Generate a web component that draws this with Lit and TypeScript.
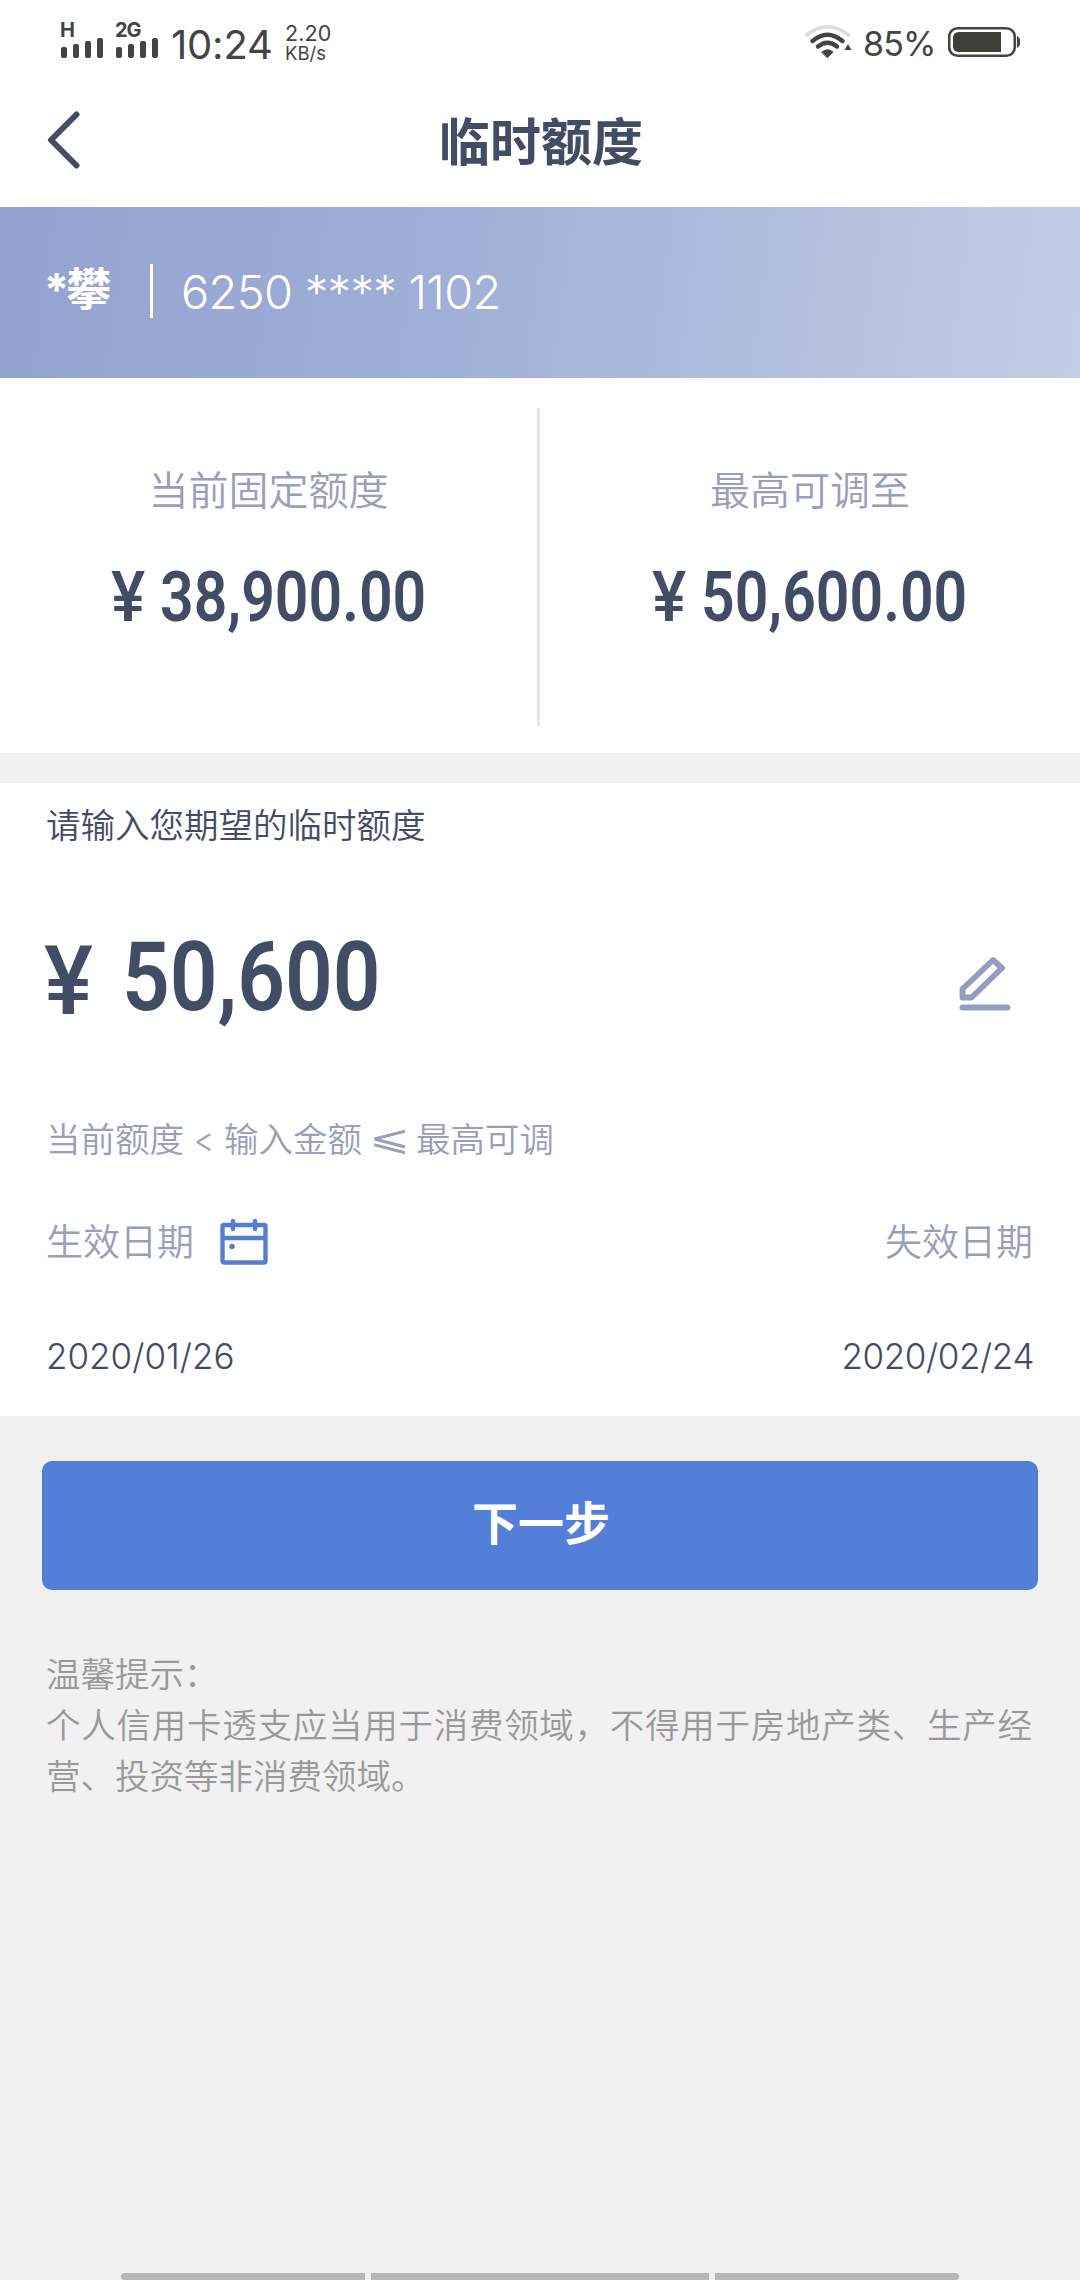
import { LitElement, html, css } from "lit";
import { customElement, property } from "lit/decorators.js";

const FONT = css`Inter, "Noto Sans CJK SC", sans-serif`;

@customElement("status-bar")
class StatusBar extends LitElement {
  static styles = css`
    :host { display: flex; height: 84px; box-sizing: border-box; padding: 0 60px 0 60px; color: #444; font-family: ${FONT}; justify-content: space-between; }
    .side { display: flex; align-items: flex-start; }
    .cell { display: flex; flex-direction: column; width: 43px; margin-right: 12px; padding-top: 20px; }
    .net { font: 700 20px/21px Inter, sans-serif; height: 18px; letter-spacing: -1px; }
    .second { margin-right: 13px; }
    .time { font-size: 40px; line-height: 48px; padding-top: 21px; width: 114px; letter-spacing: -0.2px; white-space: nowrap; }
    .rate { display: flex; flex-direction: column; padding-top: 23px; white-space: nowrap; }
    .num { font-size: 21.5px; line-height: 20px; letter-spacing: 0.1px; }
    .unit { font-size: 18.5px; line-height: 20px; }
    .wifi { padding-top: 24px; margin-right: 11px; }
    .pct { font-size: 34px; line-height: 42px; padding-top: 23px; width: 85px; letter-spacing: -0.8px; white-space: nowrap; }
    .bat { padding-top: 26px; }
    svg { display: block; }
  `;
  bars() {
    return html`<svg width="43" height="20" viewBox="0 0 43 20" fill="#444">
      <rect x="1" y="9" width="6" height="11" rx="2" /><rect x="13" y="6" width="6" height="14" rx="2" />
      <rect x="25" y="3" width="6" height="17" rx="2" /><rect x="37" y="0" width="6" height="20" rx="2" />
    </svg>`;
  }
  render() {
    return html`
      <div class="side">
        <div class="cell"><span class="net">H</span>${this.bars()}</div>
        <div class="cell second"><span class="net">2G</span>${this.bars()}</div>
        <div class="time">10:24</div>
        <div class="rate"><span class="num">2.20</span><span class="unit">KB/s</span></div>
      </div>
      <div class="side">
        <svg class="wifi" width="48" height="36" viewBox="0 0 48 36" fill="none" stroke-linecap="round">
          <path d="M2.500 11 Q23.500 -5.500 44.500 11" stroke="#dcdcdc" stroke-width="3.600" />
          <path d="M8.500 17 Q23.500 4.500 38.500 17" stroke="#444" stroke-width="4.400" />
          <path d="M14 22.500 Q23.500 14.800 33 22.500" stroke="#444" stroke-width="4.400" />
          <path d="M18 28 Q23.500 23.500 29 28 L23.500 33.500 Z" fill="#444" stroke="#444" stroke-width="1" stroke-linejoin="round" />
          <path d="M40.500 26 L44 20 L47.500 26 Z" fill="#444" />
        </svg>
        <div class="pct">85%</div>
        <svg class="bat" width="72" height="32" viewBox="0 0 72 32">
          <rect x="1.200" y="2.200" width="65.600" height="27.600" rx="8.500" fill="none" stroke="#444" stroke-width="2.600" />
          <path d="M53 6 H11 Q5 6 5 12 V20 Q5 26 11 26 H53 Z" fill="#3f3f3a" />
          <path d="M69 10 Q72.500 12 72.500 16 Q72.500 20 69 22 Z" fill="#444" />
        </svg>
      </div>`;
  }
}

@customElement("limit-cell")
class LimitCell extends LitElement {
  @property() label = "";
  @property() amount = "";
  static styles = css`
    :host { display: flex; flex-direction: column; align-items: center; padding-top: 83px; font-family: ${FONT}; }
    .label { font-size: 40px; line-height: 60px; font-weight: 350; color: #999fb9; }
    .amount { display: flex; align-items: flex-start; width: 316px; margin-top: 36px; height: 80px; color: #434c65; font-family: Roboto, sans-serif; font-weight: 600; font-size: 70px; line-height: 80px; white-space: nowrap; }
    .yen { width: 49px; flex: none; font-weight: 500; }
    .fit { display: inline-block; flex: none; transform: scaleX(0.842); transform-origin: 0 50%; }
    .yen .fit { transform: scaleX(0.92); }
  `;
  render() {
    return html`<span class="label">${this.label}</span>
      <span class="amount"><span class="yen"><span class="fit">¥</span></span><span class="fit">${this.amount}</span></span>`;
  }
}

@customElement("app-root")
class AppRoot extends LitElement {
  static styles = css`
    :host { display: flex; flex-direction: column; width: 1080px; height: 2280px; box-sizing: border-box; background: #f1f1f1; font-family: ${FONT}; color: #434c65; overflow: hidden; }
    .top { background: #fefefe; height: 207px; }
    .nav { display: grid; grid-template-columns: 200px 1fr 200px; height: 112px; align-items: center; }
    .nav svg { margin-left: 47px; display: block; }
    .title { text-align: center; font-size: 51px; line-height: 70px; font-weight: 700; padding: 5px 0 0 2px; }
    .banner { height: 171px; display: flex; align-items: center; box-sizing: border-box; padding-left: 44px; color: #fff; background: linear-gradient(98deg, #93a2cf 0%, #9eaed5 38%, #afbddd 68%, #c2cee7 100%); white-space: nowrap; }
    .name { width: 106px; font-size: 45px; line-height: 60px; font-weight: 700; letter-spacing: -3px; padding-bottom: 6px; }
    .rule { width: 3px; height: 54px; background: #fff; margin: 0 28px 4px 0; }
    .card { font-size: 47px; line-height: 60px; font-weight: 350; letter-spacing: -0.7px; padding-bottom: 2px; }
    .limits { height: 375px; display: grid; grid-template-columns: 537px 3px 540px; background: #fefefe; }
    .split { height: 318px; margin-top: 30px; background: #e6e6e6; }
    .form { margin-top: 30px; height: 633px; box-sizing: border-box; background: #fefefe; padding: 17px 46px 0 46px; display: flex; flex-direction: column; font-weight: 350; }
    .prompt { font-size: 34.5px; line-height: 52px; }
    .entry { display: flex; justify-content: space-between; margin-top: 67px; height: 120px; padding-right: 23px; }
    .value { display: flex; font-family: Roboto, sans-serif; font-weight: 600; font-size: 97px; line-height: 116px; white-space: nowrap; }
    .yen { width: 78px; padding-top: 4px; margin-left: -2px; font-weight: 500; }
    .fit { display: inline-block; transform: scaleX(0.862); transform-origin: 0 50%; }
    .yen .fit { transform: scaleX(0.95); }
    .entry svg { margin-top: 37px; }
    .hint { font-size: 34.5px; line-height: 52px; color: #999fb9; margin-top: 75px; display: flex; white-space: nowrap; }
    .lt { width: 40px; text-align: center; transform: scaleX(0.9); }
    .le { width: 54px; text-align: center; transform: translateY(-2px) scaleX(1.4); }
    .row { display: flex; justify-content: space-between; align-items: center; }
    .heads { margin-top: 45px; height: 60px; color: #999fb9; font-size: 37px; padding-right: 1px; }
    .heads span { margin-top: -2px; }
    .start { display: flex; align-items: center; gap: 26px; }
    .start svg { margin-top: 3px; }
    .dates { margin-top: 60px; height: 50px; font-size: 35px; font-weight: 320; }
    .until { letter-spacing: -0.4px; }
    .button { margin: 45px 42px 0; height: 129px; border-radius: 10px; background: #537fd8; color: #fff; font-size: 46px; line-height: 66px; font-weight: 600; display: flex; align-items: center; justify-content: center; box-sizing: border-box; padding: 0 0 5px 2px; }
    .tips { margin: 59px 48px 0 46px; font-size: 34.5px; line-height: 51px; font-weight: 350; color: #999; text-align: justify; }
    .keys { margin: auto 121px 0; height: 7px; display: grid; grid-template-columns: 244px 338px 244px; gap: 6px; }
    .key { background: #b7b7b7; }
    .key:first-child { border-radius: 4px 0 0 4px; }
    .key:last-child { border-radius: 0 4px 4px 0; }
  `;
  render() {
    return html`
      <div class="top">
        <status-bar></status-bar>
        <div class="nav">
          <svg width="36" height="60" viewBox="0 0 36 60" fill="none" stroke="#434c65" stroke-width="6" stroke-linecap="round" stroke-linejoin="round"><path d="M29.500 4.500 L4 30 L29.500 55.500" /></svg>
          <div class="title">临时额度</div>
        </div>
      </div>
      <div class="banner">
        <span class="name">*攀</span><span class="rule"></span><span class="card">6250 **** 1102</span>
      </div>
      <div class="limits">
        <limit-cell label="当前固定额度" amount="38,900.00"></limit-cell>
        <div class="split"></div>
        <limit-cell label="最高可调至" amount="50,600.00"></limit-cell>
      </div>
      <div class="form">
        <div class="prompt">请输入您期望的临时额度</div>
        <div class="entry">
          <div class="value"><span class="yen"><span class="fit">¥</span></span><span class="fit">50,600</span></div>
          <svg width="52" height="56" viewBox="0 0 52 56" fill="none" stroke="#949dbf">
            <path d="M3.500 41.500 V33 L34 4 L43 12 L12.500 41.500 Z" stroke-width="5.800" stroke-linejoin="round" />
            <path d="M3.500 51.500 H48.500" stroke-width="6" stroke-linecap="round" />
          </svg>
        </div>
        <div class="hint">当前额度<span class="lt">&lt;</span>输入金额<span class="le">⩽</span>最高可调</div>
        <div class="row heads">
          <span class="start">生效日期
            <svg width="48" height="47" viewBox="0 0 48 47" fill="none" stroke="#557fce" stroke-width="4.400">
              <rect x="2.500" y="7" width="43" height="37.500" rx="1.500" /><path d="M2.500 20 H45.500" />
              <path d="M13 3 V11 M35 3 V11" stroke-linecap="round" /><circle cx="12" cy="28.500" r="2.800" fill="#557fce" stroke="none" />
            </svg>
          </span>
          <span>失效日期</span>
        </div>
        <div class="row dates"><span>2020/01/26</span><span class="until">2020/02/24</span></div>
      </div>
      <div class="button">下一步</div>
      <div class="tips">温馨提示：<br />个人信用卡透支应当用于消费领域，不得用于房地产类、生产经营、投资等非消费领域。</div>
      <div class="keys"><span class="key"></span><span class="key"></span><span class="key"></span></div>
    `;
  }
}
